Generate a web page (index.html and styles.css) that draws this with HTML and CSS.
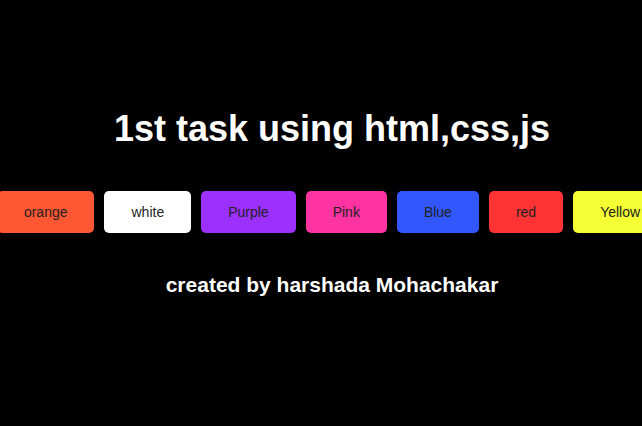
FILE: index.html
```html
<!DOCTYPE html>
<html lang="en">
<head>
<meta charset="utf-8">
<title>1st task</title>
<link rel="stylesheet" href="styles.css">
</head>
<body>
<main class="page">
  <h1 class="title">1st task using html,css,js</h1>
  <div class="buttons">
    <button class="btn orange">orange</button>
    <button class="btn white">white</button>
    <button class="btn purple">Purple</button>
    <button class="btn pink">Pink</button>
    <button class="btn blue">Blue</button>
    <button class="btn red">red</button>
    <button class="btn yellow">Yellow</button>
  </div>
  <p class="credit">created by harshada Mohachakar</p>
</main>
</body>
</html>
```
FILE: styles.css
```css
html, body {
  margin: 0;
  background: #000;
  overflow: hidden;
  height: 100%;
}
.page {
  padding: 108px 0 0 22px;
  font-family: "Liberation Sans", Arial, sans-serif;
  display: flex;
  flex-direction: column;
  align-items: center;
}
.title {
  margin: 0;
  color: #fff;
  font-size: 36px;
  font-weight: bold;
  line-height: 41px;
}
.buttons {
  margin-top: 42px;
  display: flex;
  gap: 10px;
  justify-content: center;
  width: 100%;
}
.btn {
  flex: none;
  font-family: "Liberation Sans", Arial, sans-serif;
  font-size: 14px;
  line-height: 16px;
  padding: 13px 27px;
  border: none;
  border-radius: 5px;
  color: #222;
}
.orange { background: #ff5733; }
.white { background: #ffffff; }
.purple { background: #9b30ff; }
.pink { background: #ff33a1; }
.blue { background: #3357ff; }
.red { background: #ff3333; }
.yellow { background: #f5ff33; }
.credit {
  margin: 40px 0 0;
  color: #fff;
  font-size: 21px;
  font-weight: bold;
  line-height: 24px;
}
```
